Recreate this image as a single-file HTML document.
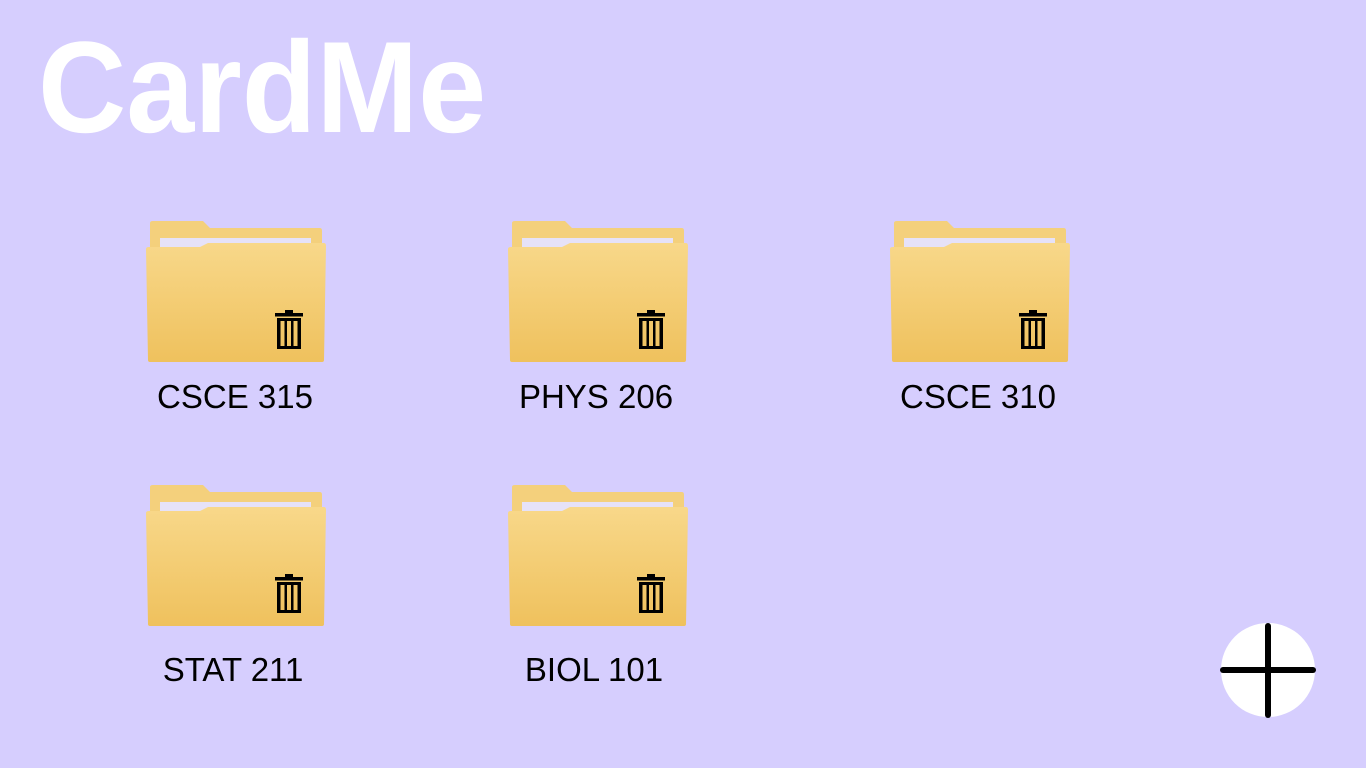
<!DOCTYPE html>
<html><head><meta charset="utf-8"><style>
body{margin:0;width:1366px;height:768px;background:#d6cefe;position:relative;overflow:hidden;font-family:"Liberation Sans",sans-serif}
.logo{position:absolute;left:38px;top:22px;font-size:130px;font-weight:bold;color:#fff;letter-spacing:0;line-height:130px;transform:scaleX(0.94);transform-origin:0 0;white-space:nowrap}
.f{position:absolute;width:182px;height:144px}
.l{position:absolute;width:300px;text-align:center;font-size:33px;color:#000}
</style></head><body>
<div class="logo">CardMe</div>
<svg width="0" height="0" style="position:absolute"><defs>
<linearGradient id="g" x1="0" y1="0" x2="0" y2="1"><stop offset="0" stop-color="#f8d88a"/><stop offset="1" stop-color="#efc15d"/></linearGradient>
<g id="fold">
<path d="M4 3 Q4 1 7 1 H57 L64 8 H174 Q176 8 176 11 V60 H4 Z" fill="#f4d07c"/>
<rect x="14" y="18" width="151" height="14" fill="#e6e2f8"/>
<path d="M0 29 Q0 27 3 27 H54 L62 23 H178 Q180 23 180 26 L178 140 Q178 142 176 142 H4 Q2 142 2 140 Z" fill="url(#g)"/>
<rect x="129" y="93" width="28" height="3.5" fill="#000"/><rect x="139" y="90" width="8" height="4" fill="#000"/>
<path d="M131 98 H155 V129 H131 Z M134.5 101 V126 H138.5 V101 Z M141 101 V126 H145 V101 Z M147.5 101 V126 H151.5 V101 Z" fill="#000" fill-rule="evenodd"/>
</g></defs></svg>
<svg class="f" style="left:146px;top:220px"><use href="#fold"/></svg>
<svg class="f" style="left:508px;top:220px"><use href="#fold"/></svg>
<svg class="f" style="left:890px;top:220px"><use href="#fold"/></svg>
<svg class="f" style="left:146px;top:484px"><use href="#fold"/></svg>
<svg class="f" style="left:508px;top:484px"><use href="#fold"/></svg>
<div class="l" style="left:85px;top:378px">CSCE 315</div>
<div class="l" style="left:446px;top:378px">PHYS 206</div>
<div class="l" style="left:828px;top:378px">CSCE 310</div>
<div class="l" style="left:83px;top:651px">STAT 211</div>
<div class="l" style="left:444px;top:651px">BIOL 101</div>
<svg style="position:absolute;left:1218px;top:620px" width="100" height="100">
<circle cx="50" cy="50" r="47" fill="#fff"/>
<line x1="50" y1="6" x2="50" y2="95" stroke="#000" stroke-width="6" stroke-linecap="round"/>
<line x1="5" y1="50" x2="95" y2="50" stroke="#000" stroke-width="6" stroke-linecap="round"/>
</svg>
</body></html>
